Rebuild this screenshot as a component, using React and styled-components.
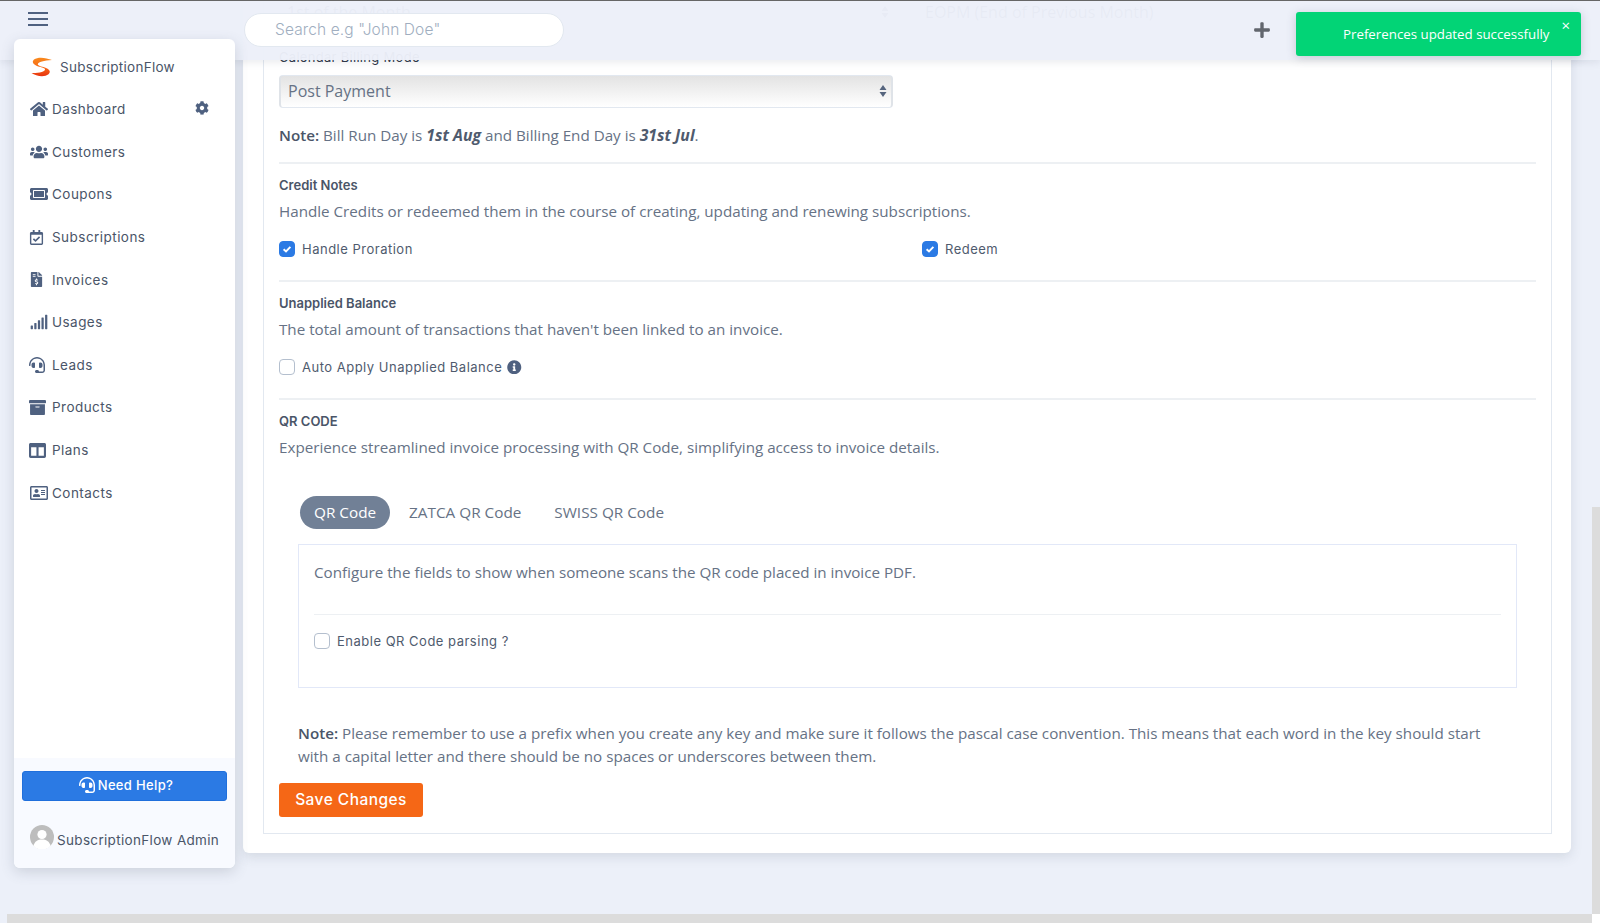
import React from "react";
import styled, { createGlobalStyle } from "styled-components";
import {
  FaHome, FaUsers, FaRegCalendarCheck, FaFileInvoiceDollar, FaSignal, FaHeadset,
  FaArchive, FaColumns, FaRegAddressCard, FaCog, FaInfoCircle, FaPlus, FaTicketAlt,
} from "react-icons/fa";

const Global = createGlobalStyle`
  html, body { margin: 0; padding: 0; height: 100%; overflow: hidden; background: #fff; }
  * { box-sizing: border-box; }
  body { font-family: "Open Sans", sans-serif; color: #4a5568; }
`;

const Page = styled.div`
  position: relative;
  width: 1600px;
  height: 923px;
  overflow: hidden;
  display: grid;
  grid-template-columns: 1fr 8px;
  grid-template-rows: 914px 9px;
  background: #ecf0f9;
`;
const Body = styled.div`
  display: flex;
  align-items: stretch;
  min-height: 0;
  overflow: hidden;
`;
const Sidebar = styled.aside`
  position: relative;
  z-index: 3;
  flex: none;
  width: 221px;
  height: 829px;
  margin: 39px 8px 0 14px;
  background: #fff;
  border-radius: 6px;
  box-shadow: 0 4px 14px rgba(74, 85, 104, 0.2);
  display: flex;
  flex-direction: column;
  overflow: hidden;
`;
const Brand = styled.div`
  height: 45px;
  margin-top: 4px;
  padding: 2px 0 0 16px;
  display: flex;
  align-items: center;
  gap: 7px;
  font: 400 13.5px "Inter", sans-serif;
  letter-spacing: 0.28px;
  color: #4a5568;
`;
const Nav = styled.nav`
  flex: 1;
  display: flex;
  flex-direction: column;
`;
const NavItem = styled.a`
  height: 42.6px;
  display: flex;
  align-items: center;
  padding-left: 15px;
  gap: 4px;
  font: 400 13.5px "Inter", sans-serif;
  letter-spacing: 0.46px;
  color: #4a5568;
`;
const NavIcon = styled.span`
  width: 19px;
  height: 18px;
  display: flex;
  align-items: center;
  justify-content: ${(p) => (p.$size < 18 ? "flex-start" : "center")};
  font-size: ${(p) => p.$size}px;
  color: #4f6180;
`;
const Gear = styled.span`
  margin-left: auto;
  margin-right: 26px;
  margin-top: -3px;
  display: flex;
  font-size: 14px;
  color: #4f6180;
`;
const SideFoot = styled.div`
  height: 110px;
  background: #f8faff;
  padding: 13px 8px 0;
`;
const Help = styled.button`
  width: 205px;
  height: 30px;
  padding: 0 0 2px 3px;
  border: 1px solid #1f6fdc;
  border-radius: 3px;
  background: #2b7ae4;
  color: #fff;
  display: flex;
  align-items: center;
  justify-content: center;
  gap: 3px;
  font: 500 13px "Inter", sans-serif;
  letter-spacing: 0.35px;
`;
const Admin = styled.div`
  margin-top: 24px;
  padding-left: 8px;
  display: flex;
  align-items: center;
  gap: 3px;
  height: 30px;
  font: 400 13.5px "Inter", sans-serif;
  letter-spacing: 0.33px;
  color: #4a5568;
  white-space: nowrap;
  svg { margin-top: -6px; }
`;
const Main = styled.main`
  flex: 1;
  min-width: 0;
  padding: 0 21px 61px 0;
  display: flex;
  flex-direction: column;
  justify-content: flex-end;
`;
const Card = styled.section`
  flex: none;
  background: #fff;
  border-radius: 0 0 6px 6px;
  box-shadow: 0 4px 12px rgba(74, 85, 104, 0.15);
  padding: 0 19px 19px 20px;
`;
const Frame = styled.div`
  border: 1px solid #e2e8f0;
  border-top: 0;
  padding: 0 15px 16px;
`;
const GhostRow = styled.div`
  display: grid;
  grid-template-columns: 614px 1fr;
  gap: 32px;
  height: 33px;
  align-items: center;
`;
const GhostSelect = styled.div`
  display: flex;
  justify-content: space-between;
  align-items: center;
  padding: 0 4px 4px 8px;
  font-size: 16px;
  color: #4a5568;
`;
const GhostInput = styled.div`
  padding: 0 0 4px;
  font-size: 16px;
  color: #4a5568;
  white-space: nowrap;
`;
const FieldLabel = styled.div`
  margin-top: 17px;
  height: 20px;
  font: 400 13px/20px "Inter", sans-serif;
  letter-spacing: 0.3px;
  color: #2d3748;
`;
const Select = styled.div`
  width: 614px;
  height: 33px;
  margin-top: 8px;
  padding: 0 4px 2px 7px;
  display: flex;
  align-items: center;
  justify-content: space-between;
  border: 1px solid #e2e8f0;
  border-left: 2px solid #dfe3e8;
  border-right: 2px solid #dfe3e8;
  border-radius: 4px;
  background: linear-gradient(#e3e3e3, #ffffff);
  font-size: 16px;
  color: #667285;
`;
const Note = styled.p`
  margin: 16px 0 0;
  height: 22px;
  line-height: 22px;
  font-size: 15.2px;
  color: #667285;
  b { font-weight: 600; color: #4a5568; }
  em { font-size: 15.8px; font-weight: 700; font-style: italic; color: #4f5b6e; }
`;
const Block = styled.div`
  margin-top: ${(p) => (p.$first ? "16px" : "0")};
  padding: 12px 0 ${(p) => (p.$last ? "0" : "20px")};
  border-top: 2px solid #edf0f3;
`;
const Heading = styled.h4`
  margin: 0;
  height: 19px;
  font: 600 13px/18px "Inter", sans-serif;
  color: #4a5568;
`;
const Desc = styled.p`
  margin: 5px 0 ${(p) => (p.$tight ? "0" : "16px")};
  height: 22px;
  line-height: 22px;
  font-size: 15.2px;
  color: #667285;
`;
const CheckRow = styled.div`
  display: grid;
  grid-template-columns: 643px 1fr;
  height: 22px;
  align-items: center;
`;
const CheckWrap = styled.label`
  display: flex;
  align-items: center;
  gap: 7px;
  font: 400 13px "Inter", sans-serif;
  letter-spacing: 0.5px;
  color: #4f5b6e;
`;
const Box = styled.span`
  flex: none;
  width: 16px;
  height: 16px;
  border-radius: 4px;
  display: flex;
  align-items: center;
  justify-content: center;
  background: ${(p) => (p.$on ? "#2b7ae4" : "#fff")};
  border: 1px solid ${(p) => (p.$on ? "#2b7ae4" : "#b4bfce")};
`;
const Info = styled.span`
  display: flex;
  font-size: 14.5px;
  color: #4f6180;
  margin-left: -2px;
`;
const QrBody = styled.div`
  padding: 0 19px;
`;
const Tabs = styled.div`
  display: flex;
  gap: 5px;
  margin: 38px 0 15px 2px;
  height: 33px;
`;
const Tab = styled.button`
  height: 33px;
  padding: 0 14px 2px;
  border: 0;
  border-radius: 17px;
  font: 400 15.3px "Open Sans", sans-serif;
  background: ${(p) => (p.$active ? "#718096" : "transparent")};
  color: ${(p) => (p.$active ? "#fff" : "#667285")};
`;
const Panel = styled.div`
  height: 144px;
  border: 1px solid #e2e8f8;
  padding: 16px 15px 0;
`;
const PanelText = styled.p`
  margin: 0;
  height: 22px;
  line-height: 22px;
  font-size: 15.2px;
  color: #667285;
`;
const PanelRule = styled.hr`
  margin: 31px 0 15px;
  border: 0;
  border-top: 1px solid #edf0f3;
`;
const Pascal = styled.p`
  margin: 34px 0 15px;
  padding-right: 30px;
  font-size: 15.2px;
  line-height: 23px;
  color: #667285;
  b { font-weight: 600; color: #4a5568; }
`;
const Save = styled.button`
  display: block;
  width: 144px;
  height: 34px;
  padding: 0 0 2px;
  border: 0;
  border-radius: 3px;
  background: #f56716;
  color: #fff;
  font: 500 15.5px "Inter", sans-serif;
  letter-spacing: 0.45px;
`;
const VTrack = styled.div`
  margin-top: 507px;
  background: #dcdcdc;
`;
const HTrack = styled.div`
  margin-left: 7px;
  background: #dcdcdc;
`;
const Corner = styled.div`
  background: #fff;
`;
const Header = styled.header`
  position: absolute;
  z-index: 2;
  top: 0;
  left: 0;
  right: 0;
  height: 60px;
  background: rgba(236, 240, 249, 0.97);
  border-top: 1px solid #666;
  box-shadow: 0 2px 8px rgba(74, 85, 104, 0.12);
`;
const Burger = styled.button`
  position: absolute;
  left: 28px;
  top: 11px;
  width: 20px;
  height: 14px;
  padding: 0;
  border: 0;
  background: transparent;
  border-top: 2px solid #4f6180;
  border-bottom: 2px solid #4f6180;
  &::after {
    content: "";
    display: block;
    height: 2px;
    background: #4f6180;
  }
`;
const Search = styled.input`
  position: absolute;
  left: 244px;
  top: 12px;
  width: 320px;
  height: 34px;
  padding: 0 30px 2px 30px;
  border: 1px solid #e2e8f0;
  border-radius: 17px;
  background: #fff;
  font: 300 15.5px "Inter", sans-serif;
  letter-spacing: 0.12px;
  &::placeholder { color: #a0aec0; opacity: 1; }
`;
const Plus = styled.span`
  position: absolute;
  left: 1253px;
  top: 20px;
  display: flex;
  font-size: 18px;
  color: #62666e;
`;
const Toast = styled.div`
  position: absolute;
  z-index: 4;
  left: 1296px;
  top: 12px;
  width: 285px;
  height: 44px;
  border-radius: 3px;
  background: #02d476;
  box-shadow: 0 2px 10px rgba(74, 85, 104, 0.25);
  color: #fff;
  font-size: 13.3px;
  line-height: 44px;
  padding-left: 47px;
`;
const ToastClose = styled.span`
  position: absolute;
  right: 11px;
  top: 5px;
  font-size: 15px;
  line-height: 16px;
`;

const Tick = () => (
  <svg width="10" height="10" viewBox="0 0 10 10">
    <path d="M1.6 5.2 4 7.5 8.4 2.8" fill="none" stroke="#fff" strokeWidth="1.9" />
  </svg>
);
const Check = ({ on, children }) => (
  <CheckWrap>
    <Box $on={on}>{on && <Tick />}</Box>
    {children}
  </CheckWrap>
);
const Updown = () => (
  <svg width="8" height="14" viewBox="0 0 8 14">
    <path d="M4 1 7.500 6h-7zM4 13 .5 8h7z" fill="#56657e" />
  </svg>
);
const Logo = () => (
  <svg width="23" height="20" viewBox="0 0 23 20">
    <defs>
      <linearGradient id="sf" x1="0" y1="0" x2="0" y2="1">
        <stop offset="0" stopColor="#f98a1e" />
        <stop offset="0.55" stopColor="#f56716" />
        <stop offset="1" stopColor="#e8330f" />
      </linearGradient>
    </defs>
    <path
      d="M22 3C16 .5 8-.5 4 2.500 1.500 4.800 3 7.500 7 9c3 1.200 7.500 1.500 8 3.200.5 2-5 4-13.500 3.800 4.500 3.300 13 4.500 17 1.300 2.500-2.300 1.200-5-2.500-6.400-3-1.200-7.500-1.600-8.200-3.400C7.300 5.500 14 3.200 22 3Z"
      fill="url(#sf)"
    />
  </svg>
);
const Avatar = () => (
  <svg width="24" height="24" viewBox="0 0 24 24">
    <circle cx="12" cy="12" r="12" fill="#bdbdbd" />
    <circle cx="12" cy="9.500" r="4.600" fill="#fff" />
    <path d="M3.500 21c1-5 4.500-6.500 8.500-6.500s7.500 1.500 8.500 6.500A12 12 0 0 1 3.500 21Z" fill="#fff" />
  </svg>
);

const items = [
  ["Dashboard", FaHome, 18],
  ["Customers", FaUsers, 18],
  ["Coupons", FaTicketAlt, 18],
  ["Subscriptions", FaRegCalendarCheck, 15],
  ["Invoices", FaFileInvoiceDollar, 15],
  ["Usages", FaSignal, 18],
  ["Leads", FaHeadset, 16],
  ["Products", FaArchive, 17],
  ["Plans", FaColumns, 17],
  ["Contacts", FaRegAddressCard, 18],
];

export default function App() {
  return (
    <Page>
      <Global />
      <Body>
        <Sidebar>
          <Brand>
            <Logo />
            SubscriptionFlow
          </Brand>
          <Nav>
            {items.map(([label, Icon, size]) => (
              <NavItem key={label}>
                <NavIcon $size={size}>
                  <Icon />
                </NavIcon>
                {label}
                {label === "Dashboard" && (
                  <Gear>
                    <FaCog />
                  </Gear>
                )}
              </NavItem>
            ))}
          </Nav>
          <SideFoot>
            <Help>
              <FaHeadset size={16} />
              Need Help?
            </Help>
            <Admin>
              <Avatar />
              SubscriptionFlow Admin
            </Admin>
          </SideFoot>
        </Sidebar>
        <Main>
          <Card>
            <Frame>
              <GhostRow>
                <GhostSelect>
                  1st of the Month
                  <Updown />
                </GhostSelect>
                <GhostInput>EOPM (End of Previous Month)</GhostInput>
              </GhostRow>
              <FieldLabel>Calendar Billing Mode</FieldLabel>
              <Select>
                Post Payment
                <Updown />
              </Select>
              <Note>
                <b>Note:</b> Bill Run Day is <em>1st Aug</em> and Billing End Day is <em>31st Jul</em>.
              </Note>
              <Block $first>
                <Heading>Credit Notes</Heading>
                <Desc>Handle Credits or redeemed them in the course of creating, updating and renewing subscriptions.</Desc>
                <CheckRow>
                  <Check on>Handle Proration</Check>
                  <Check on>Redeem</Check>
                </CheckRow>
              </Block>
              <Block>
                <Heading>Unapplied Balance</Heading>
                <Desc>The total amount of transactions that haven't been linked to an invoice.</Desc>
                <CheckRow>
                  <Check>
                    Auto Apply Unapplied Balance
                    <Info>
                      <FaInfoCircle />
                    </Info>
                  </Check>
                </CheckRow>
              </Block>
              <Block $last>
                <Heading>QR CODE</Heading>
                <Desc $tight>
                  Experience streamlined invoice processing with QR Code, simplifying access to invoice details.
                </Desc>
                <QrBody>
                  <Tabs>
                    <Tab $active>QR Code</Tab>
                    <Tab>ZATCA QR Code</Tab>
                    <Tab>SWISS QR Code</Tab>
                  </Tabs>
                  <Panel>
                    <PanelText>Configure the fields to show when someone scans the QR code placed in invoice PDF.</PanelText>
                    <PanelRule />
                    <CheckRow>
                      <Check>Enable QR Code parsing ?</Check>
                    </CheckRow>
                  </Panel>
                  <Pascal>
                    <b>Note:</b> Please remember to use a prefix when you create any key and make sure it follows the pascal case convention. This means that each word in the key should start with a capital letter and there should be no spaces or underscores between them.
                  </Pascal>
                </QrBody>
                <Save>Save Changes</Save>
              </Block>
            </Frame>
          </Card>
        </Main>
      </Body>
      <VTrack />
      <HTrack />
      <Corner />
      <Header>
        <Burger aria-label="menu" />
        <Search placeholder={'Search e.g "John Doe"'} />
        <Plus>
          <FaPlus />
        </Plus>
      </Header>
      <Toast>
        Preferences updated successfully
        <ToastClose>×</ToastClose>
      </Toast>
    </Page>
  );
}
